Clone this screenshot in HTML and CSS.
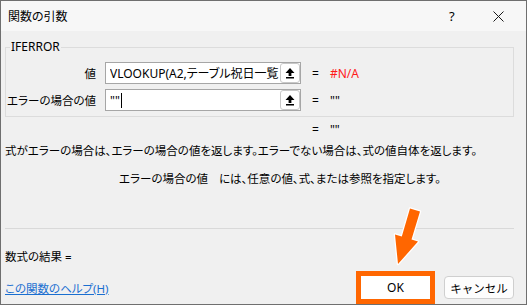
FILE: index.html
```html
<!DOCTYPE html>
<html lang="ja">
<head>
  <meta charset="UTF-8">
  <title>関数の引数</title>
  <link rel="stylesheet" href="styles.css">
</head>
<body>
  <div class="window">
    <div class="titlebar">
      <span class="title">関数の引数</span>
      <span class="help">?</span>
      <svg class="close" width="11" height="11" viewBox="0 0 11 11">
        <path d="M0.5 0.5L10.5 10.5M10.5 0.5L0.5 10.5" stroke="#1a1a1a" stroke-width="1"/>
      </svg>
    </div>

    <div class="content">
      <fieldset class="group">
        <legend>IFERROR</legend>
        <div class="args">
          <label class="arg-label">値</label>
          <div class="ref-input">
            <span class="ref-text">VLOOKUP(A2,テーブル祝日一覧</span>
            <span class="ref-btn">
              <svg width="12" height="12" viewBox="0 0 12 12">
                <path d="M6 1L10.5 6H7.4V9H4.6V6H1.5Z" fill="#000"/>
                <rect x="2" y="10" width="8" height="1.5" fill="#000"/>
              </svg>
            </span>
          </div>
          <span class="eq">=</span>
          <span class="val error">#N/A</span>

          <label class="arg-label">エラーの場合の値</label>
          <div class="ref-input">
            <span class="ref-text">""<span class="caret"></span></span>
            <span class="ref-btn">
              <svg width="12" height="12" viewBox="0 0 12 12">
                <path d="M6 1L10.5 6H7.4V9H4.6V6H1.5Z" fill="#000"/>
                <rect x="2" y="10" width="8" height="1.5" fill="#000"/>
              </svg>
            </span>
          </div>
          <span class="eq">=</span>
          <span class="val">""</span>
        </div>
      </fieldset>

      <div class="total"><span class="eq">=</span><span class="val">""</span></div>

      <p class="desc">式がエラーの場合は、エラーの場合の値を返します。エラーでない場合は、式の値自体を返します。</p>
      <p class="arg-desc"><span class="arg-name">エラーの場合の値</span>には、任意の値、式、または参照を指定します。</p>

      <hr class="sep">

      <p class="result">数式の結果 =</p>

      <div class="footer">
        <a class="help-link" href="#">この関数のヘルプ(H)</a>
        <button class="btn btn-ok">OK</button>
        <button class="btn">キャンセル</button>
      </div>
    </div>

    <svg class="pointer" width="527" height="305" viewBox="0 0 527 305">
      <polygon points="410,208.5 420,211.5 411.5,239.5 418,241.6 398,264 395,234.4 401.8,236.5"
               fill="#ff6600" stroke="#fff" stroke-width="2.5" stroke-linejoin="round" paint-order="stroke"/>
    </svg>
  </div>
</body>
</html>
```

FILE: styles.css
```css
body {
  margin: 0;
  font-family: "Noto Sans", "Noto Sans CJK JP", sans-serif;
  font-size: 11.5px;
  font-feature-settings: "palt";
  color: #000;
  background: #f0f0f0;
}

.window {
  position: relative;
  width: 527px;
  height: 305px;
  box-sizing: border-box;
  border: 1px solid #6f6f6f;
  background-color: #f0f0f0;
  overflow: hidden;
}

.titlebar {
  display: flex;
  align-items: center;
  height: 30px;
  padding-left: 7px;
  background-color: #f7f7f7;
}

.title {
  flex: 1;
  font-size: 12px;
}

.help {
  width: 12px;
  margin-right: 32px;
  font-size: 13px;
}

.close {
  margin-right: 22px;
}

.content {
  padding: 0 12px 0 4px;
}

.group {
  margin: 8px 0 0;
  padding: 0 0 5px;
  border: 1px solid #dcdcdc;
}

.group legend {
  margin-left: 4px;
  padding: 0 1px;
  font-size: 12px;
  line-height: 16px;
}

.args {
  display: grid;
  grid-template-columns: 99px 196px 29px auto;
  row-gap: 5px;
  align-items: center;
  margin-top: 7px;
}

.arg-label {
  text-align: right;
  padding-right: 9px;
}

.ref-input {
  display: flex;
  align-items: center;
  height: 22px;
  box-sizing: border-box;
  border: 1px solid #a6a6a6;
  background: #fff;
  padding-left: 4px;
}

.ref-text {
  flex: 1;
  font-size: 12px;
  white-space: nowrap;
  overflow: hidden;
  display: flex;
  align-items: center;
}

.caret {
  display: inline-block;
  width: 1px;
  height: 15px;
  margin-left: 1px;
  background: #000;
}

.ref-btn {
  display: flex;
  align-items: center;
  justify-content: center;
  width: 20px;
  height: 20px;
  box-sizing: border-box;
  border: 1px solid #c8c8c8;
  border-radius: 3px;
  background: #fff;
}

.eq {
  padding-left: 11px;
  font-size: 12px;
}

.val {
  font-size: 12px;
}

.error {
  color: #ff1a1a;
}

.total {
  margin-top: 5px;
  padding-left: 296px;
  line-height: 16px;
}

.total .eq {
  padding-right: 11px;
}

.desc {
  margin: 5px 0 0;
  line-height: 16px;
}

.arg-desc {
  margin: 12px 0 0;
  padding-left: 114px;
  line-height: 16px;
}

.arg-name {
  margin-right: 11px;
}

.sep {
  margin: 41px 0 0;
  border: none;
  border-top: 1px solid #d9d9d9;
}

.result {
  margin: 20px 0 0;
  line-height: 16px;
}

.footer {
  display: flex;
  align-items: center;
  margin-top: 11px;
}

.help-link {
  flex: 1;
  color: #1a6fd0;
  text-decoration: underline;
}

.btn {
  height: 23px;
  width: 70px;
  box-sizing: border-box;
  border: 1px solid #cfcfcf;
  border-radius: 4px;
  background: #fdfdfd;
  font-family: inherit;
  font-size: 11.5px;
  color: #000;
  padding: 0;
}

.btn-ok {
  width: 69px;
  margin-right: 14px;
  border-radius: 0;
  border-color: #fff;
  background: #fff;
  font-size: 12px;
  outline: 5px solid #ff6600;
}

.pointer {
  position: absolute;
  left: -1px;
  top: -1px;
  pointer-events: none;
}
```
